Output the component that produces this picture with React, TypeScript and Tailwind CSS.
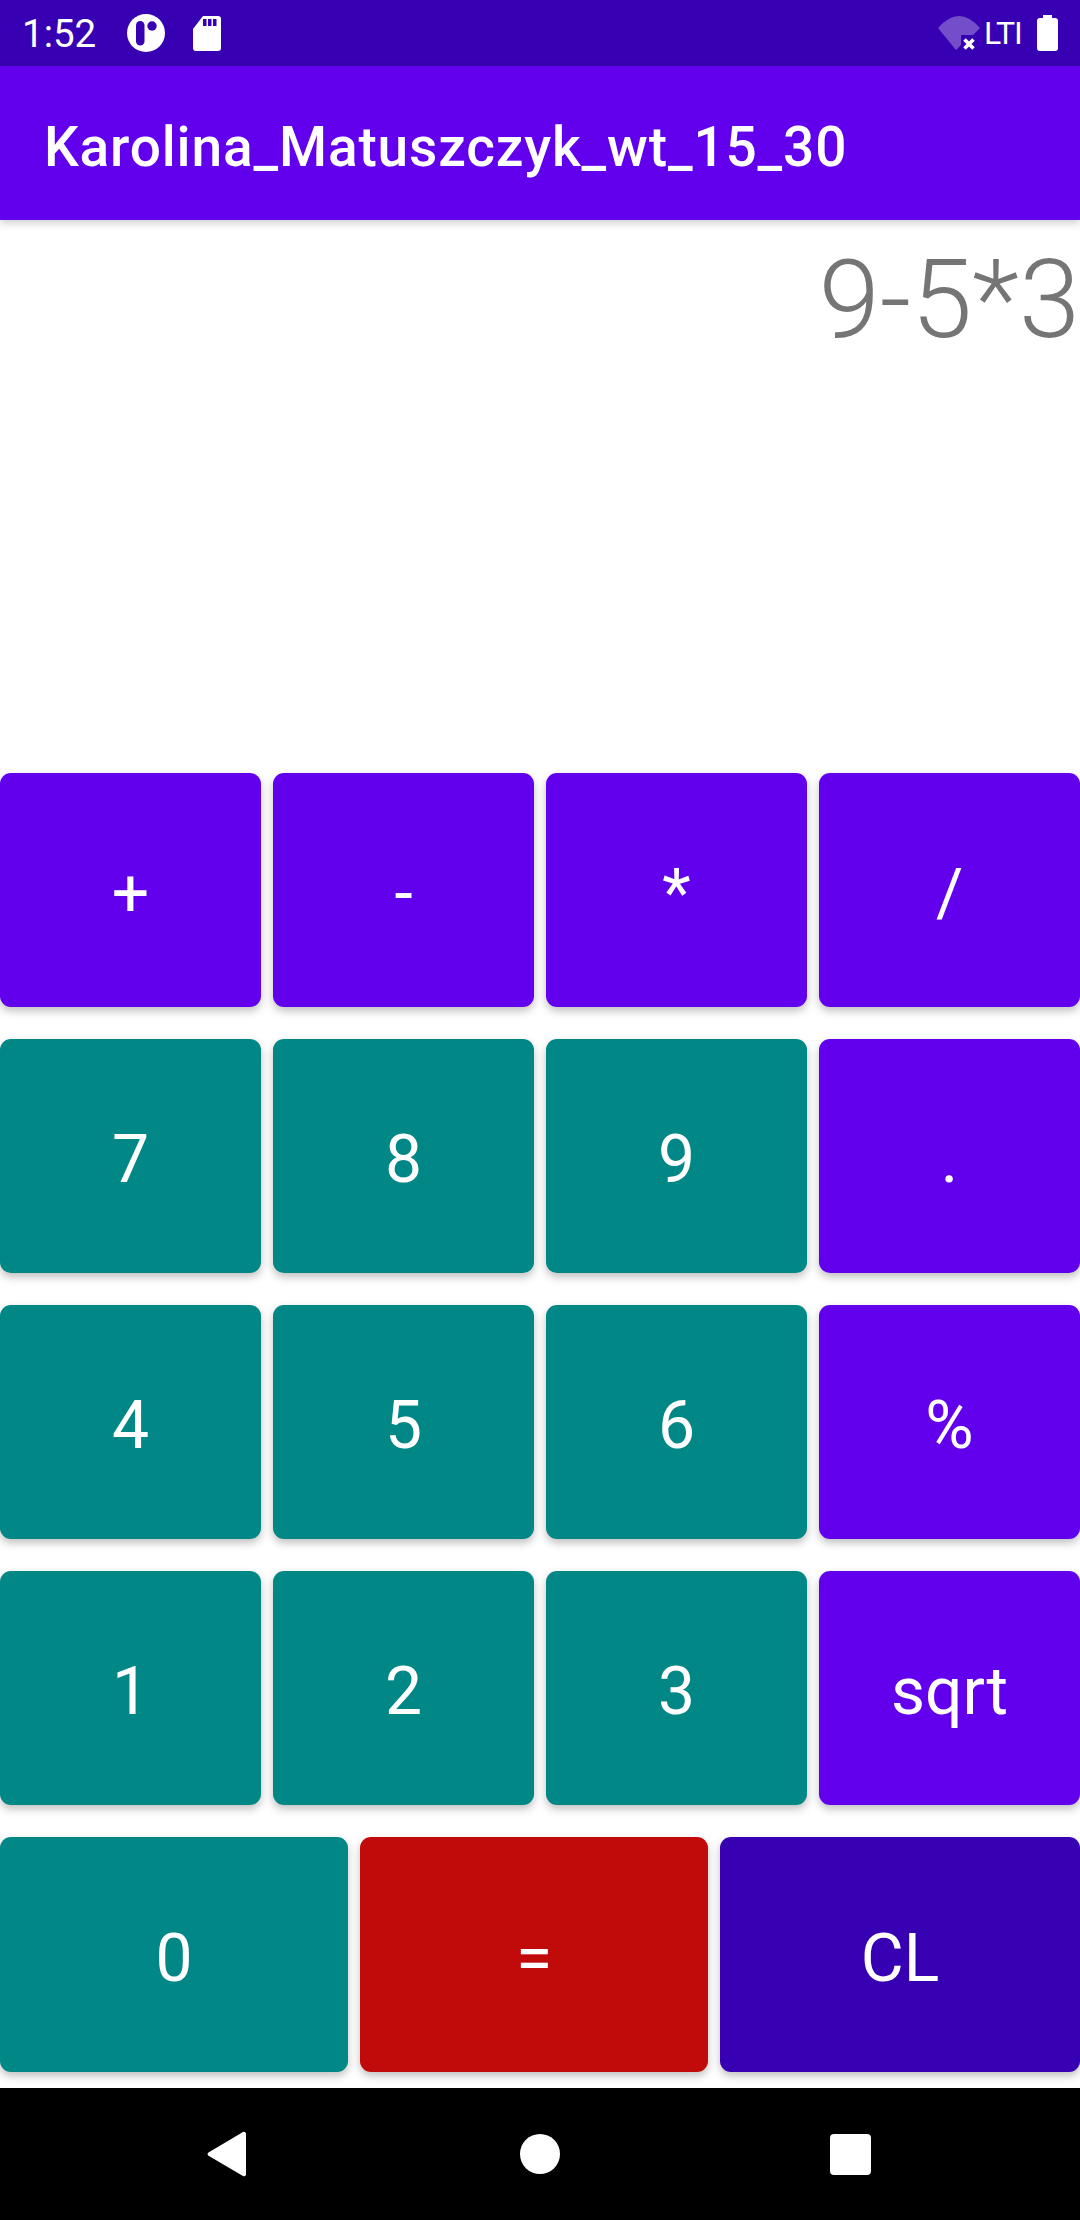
import React from "react";

const ROBOTO = "font-['Roboto',sans-serif]";

const rows = [
  [
    { label: "+", color: "bg-[#6200ee]" },
    { label: "-", color: "bg-[#6200ee]" },
    { label: "*", color: "bg-[#6200ee]" },
    { label: "/", color: "bg-[#6200ee]" },
  ],
  [
    { label: "7", color: "bg-[#018786]" },
    { label: "8", color: "bg-[#018786]" },
    { label: "9", color: "bg-[#018786]" },
    { label: ".", color: "bg-[#6200ee]" },
  ],
  [
    { label: "4", color: "bg-[#018786]" },
    { label: "5", color: "bg-[#018786]" },
    { label: "6", color: "bg-[#018786]" },
    { label: "%", color: "bg-[#6200ee]" },
  ],
  [
    { label: "1", color: "bg-[#018786]" },
    { label: "2", color: "bg-[#018786]" },
    { label: "3", color: "bg-[#018786]" },
    { label: "sqrt", color: "bg-[#6200ee]" },
  ],
];

const CalcButton = ({ label, color }: { label: string; color: string }) => (
  <button
    className={`${color} flex items-center justify-center rounded-[11px] pt-[8px] text-[66px] leading-none text-white shadow-[0_4px_8px_rgba(0,0,0,0.25)]`}
  >
    {label}
  </button>
);

const StatusBar = () => (
  <div className="flex h-[66px] items-center bg-[#3700b3] text-white">
    <span className="ml-[22px] w-[105px] pt-[2px] text-[38.5px] leading-none">1:52</span>
    <svg width="38" height="38" viewBox="0 0 38 38" className="shrink-0">
      <circle cx="19" cy="19" r="19" fill="#fff" />
      <rect x="9" y="7" width="8.5" height="24.5" rx="4.25" fill="#3700b3" />
      <circle cx="25" cy="12" r="4.7" fill="#3700b3" />
    </svg>
    <svg width="28" height="35" viewBox="0 0 28 35" className="ml-[28px] shrink-0">
      <path d="M10 0h15a3 3 0 0 1 3 3v29a3 3 0 0 1-3 3H3a3 3 0 0 1-3-3V13z" fill="#fff" />
      <rect x="10" y="3" width="3.5" height="7" fill="#3700b3" />
      <rect x="15" y="3" width="3.5" height="7" fill="#3700b3" />
      <rect x="20" y="3" width="3.5" height="7" fill="#3700b3" />
    </svg>
    <svg width="44" height="40" viewBox="0 0 44 40" className="ml-auto shrink-0">
      <path d="M0 15Q21 -9 42 15L35 22H23V32L18 37z" fill="#fff" fillOpacity="0.3" />
      <path d="M26.5 26.5L35.5 35.5M35.5 26.5L26.5 35.5" stroke="#fff" strokeWidth="3.6" />
    </svg>
    <span className="ml-[2px] w-[40px] text-[32px] tracking-[-1px] leading-none">LTI</span>
    <svg width="21" height="36" viewBox="0 0 21 36" className="ml-[13px] mr-[22px] shrink-0">
      <path d="M6 0h9v3h3a3 3 0 0 1 3 3v27a3 3 0 0 1-3 3H3a3 3 0 0 1-3-3V6a3 3 0 0 1 3-3h3z" fill="#fff" />
    </svg>
  </div>
);

export default function App() {
  return (
    <div className={`${ROBOTO} flex h-[2220px] w-[1080px] flex-col overflow-hidden bg-white`}>
      <StatusBar />
      <div className="z-10 flex h-[154px] items-center bg-[#6200ee] pl-[44px] pt-[8px] shadow-[0_3px_8px_rgba(0,0,0,0.2)]">
        <h1 className="text-[55px] font-medium leading-none tracking-[0.85px] text-white">
          Karolina_Matuszczyk_wt_15_30
        </h1>
      </div>

      <div className="flex-1 pt-[15px] text-right text-[110px] font-light leading-[130px] text-[#757575]">
        9-5*3
      </div>

      <div className="flex flex-col gap-[32px] pb-[16px]">
        {rows.map((row) => (
          <div key={row[0].label} className="grid h-[234px] grid-cols-4 gap-[12px]">
            {row.map((btn) => (
              <CalcButton key={btn.label} label={btn.label} color={btn.color} />
            ))}
          </div>
        ))}
        <div className="grid h-[235px] grid-cols-[348px_348px_1fr] gap-[12px]">
          <CalcButton label="0" color="bg-[#018786]" />
          <CalcButton label="=" color="bg-[#c10a0a]" />
          <CalcButton label="CL" color="bg-[#3700b3]" />
        </div>
      </div>

      <div className="flex h-[132px] items-center justify-between bg-black pl-[207px] pr-[209px]">
        <svg width="39" height="46" viewBox="0 0 39 46">
          <path d="M36 1a2 2 0 0 1 3 1.5v41a2 2 0 0 1-3 1.5L1.5 24.8a2 2 0 0 1 0-3.4z" fill="#fff" />
        </svg>
        <div className="ml-[4px] h-[40px] w-[40px] rounded-full bg-white" />
        <div className="h-[41px] w-[41px] rounded-[4px] bg-white" />
      </div>
    </div>
  );
}
